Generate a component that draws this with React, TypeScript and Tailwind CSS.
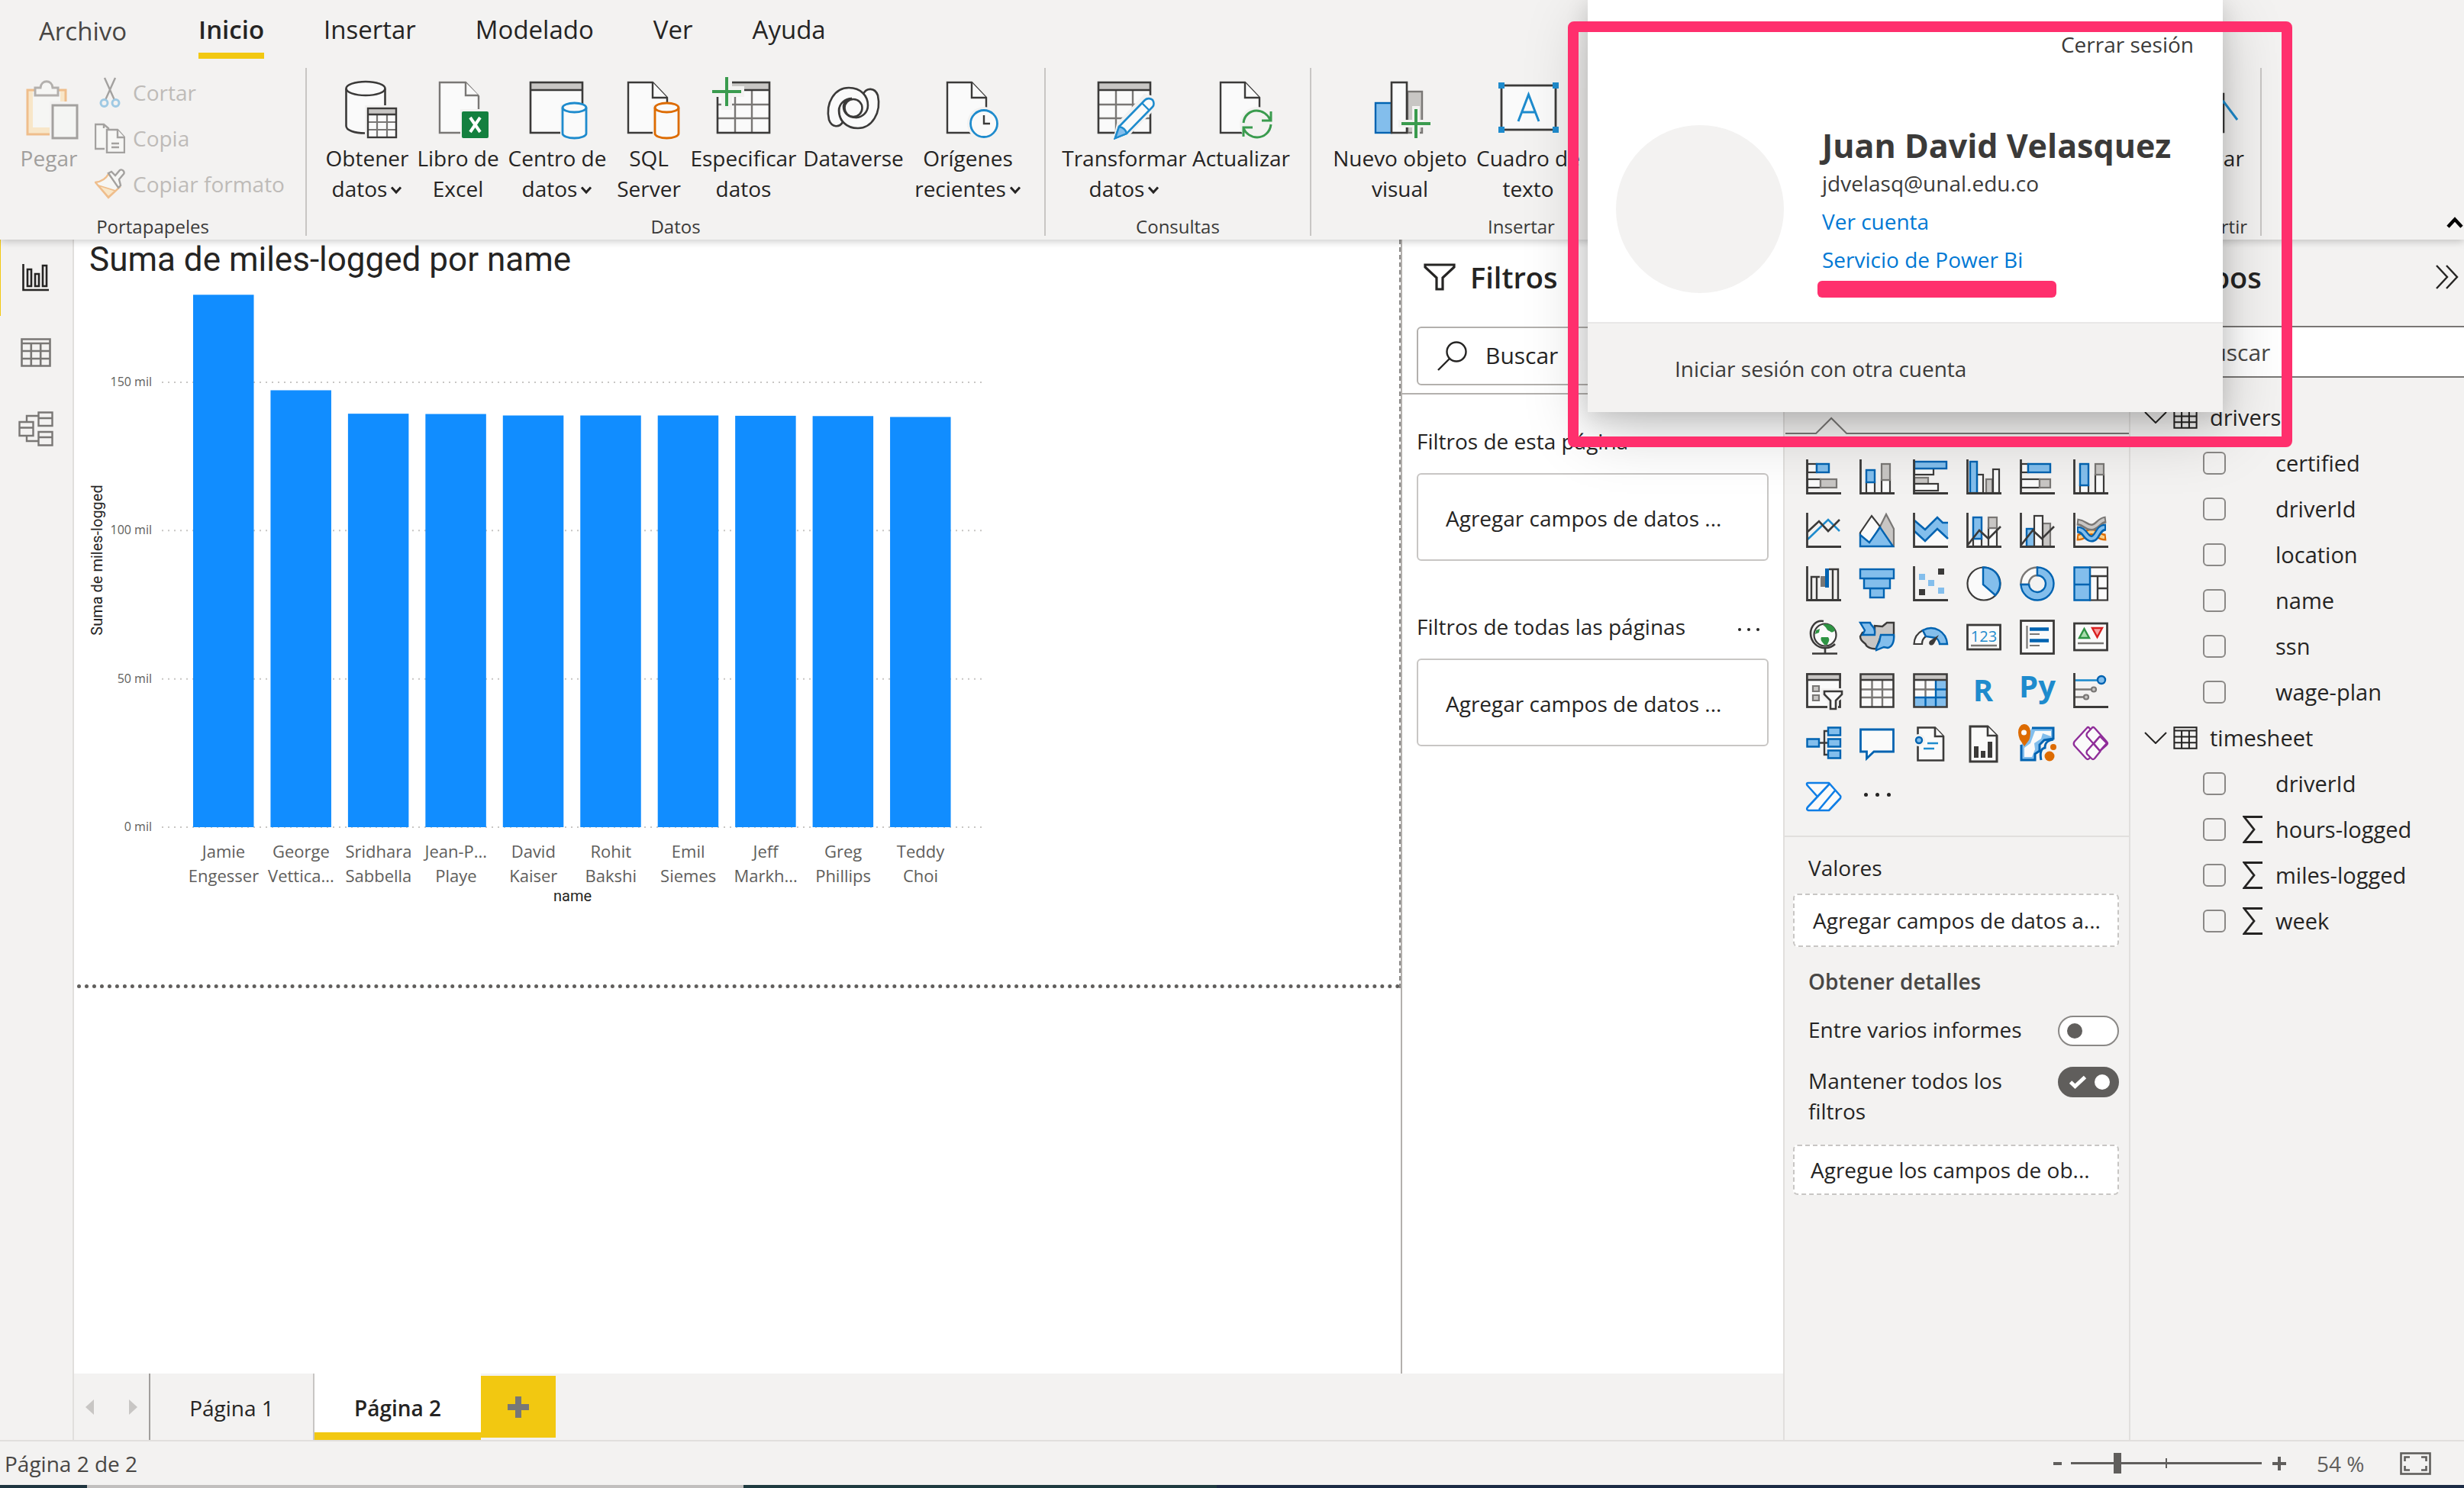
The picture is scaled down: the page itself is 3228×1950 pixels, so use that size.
import React from "react";

const INK = "#3b3a39";
const MID = "#797775";
const PALE = "#c8c6c4";
const PAPER = "#fafafa";
const NAVY = "#0063b1";
const SKY = "#83beec";
const BLUE = "#1e8bcd";
const GREEN = "#3a9b4e";

/* ---------- Ribbon icons (80 x 80) ---------- */

function Sheet({ stroke = INK }: { stroke?: string }) {
  return (
    <g fill={PAPER} stroke={stroke} strokeWidth="2.4">
      <path d="M13 5H45L64 25V71H13Z" />
      <path d="M45 5V25H64" />
    </g>
  );
}

function Cylinder({ x, y, w, h, color }: { x: number; y: number; w: number; h: number; color: string }) {
  const r = w / 2;
  return (
    <g>
      <path d={`M${x - 3} ${y + 2}H${x + w + 4}V${y + h + 3}H${x - 3}Z`} fill="#f3f2f1" />
      <path
        d={`M${x} ${y + 6}a${r} 6 0 0 1 ${w} 0V${y + h - 6}a${r} 6 0 0 1 ${-w} 0Z`}
        fill={PAPER}
        stroke={color}
        strokeWidth="2.8"
      />
      <path d={`M${x} ${y + 6}a${r} 6 0 0 0 ${w} 0`} fill="none" stroke={color} strokeWidth="2.8" />
    </g>
  );
}

function BigTable() {
  return (
    <g>
      <rect x="6" y="5" width="68" height="66" fill={PAPER} />
      <rect x="6" y="5" width="68" height="10" fill={PALE} />
      <path d="M29 15V71M51 15V71M6 34H74M6 52H74" stroke={MID} strokeWidth="2.4" />
      <path d="M6 15H74" stroke={INK} strokeWidth="2.4" />
      <rect x="6" y="5" width="68" height="66" fill="none" stroke={INK} strokeWidth="2.6" />
    </g>
  );
}

const ribbonArt: Record<string, React.ReactNode> = {
  getData: (
    <g>
      <path d="M13 13V62C13 68 24 71 36 71H64V13Z" fill={PAPER} />
      <ellipse cx="38" cy="13" rx="25.5" ry="9" fill={PAPER} stroke={INK} strokeWidth="2.6" />
      <path d="M12.500 13V62C12.500 68 24 71.500 37 71.500M63.500 13V36" fill="none" stroke={INK} strokeWidth="2.6" />
      <rect x="37" y="35" width="44" height="46" fill="#f3f2f1" />
      <rect x="41" y="39" width="37" height="38" fill={PAPER} />
      <rect x="41" y="39" width="37" height="8" fill={PALE} />
      <path d="M53 47V77M66 47V77M41 57H78M41 67H78" stroke={MID} strokeWidth="2.2" />
      <path d="M41 47H78" stroke={INK} strokeWidth="2.4" />
      <rect x="41" y="39" width="37" height="38" fill="none" stroke={INK} strokeWidth="2.4" />
    </g>
  ),
  excel: (
    <g>
      <g fill={PAPER} stroke={MID} strokeWidth="2.4">
        <path d="M16 5H50L67 23V71H16Z" />
        <path d="M50 5V22H67" />
      </g>
      <rect x="43" y="40" width="40" height="42" fill="#f3f2f1" />
      <rect x="45" y="43" width="35" height="35" rx="2" fill="#14803f" />
      <path d="M56 51L69 70M69 51L56 70" stroke="#fff" strokeWidth="4" />
    </g>
  ),
  hub: (
    <g>
      <rect x="5" y="5" width="68" height="66" fill={PAPER} />
      <rect x="5" y="5" width="68" height="10" fill={PALE} />
      <path d="M5 15H73" stroke={INK} strokeWidth="2.4" />
      <rect x="5" y="5" width="68" height="66" fill="none" stroke={INK} strokeWidth="2.6" />
      <Cylinder x={47} y={32} w={31} h={46} color={BLUE} />
    </g>
  ),
  sql: (
    <g>
      <Sheet />
      <Cylinder x={48} y={32} w={31} h={46} color="#dd6b00" />
    </g>
  ),
  enter: (
    <g>
      <BigTable />
      <path d="M0 -3H25V10H41V24H25V41H11V24H-3V10H0Z" fill="#f3f2f1" />
      <path d="M18 -2V36M-1 17H37" stroke={GREEN} strokeWidth="4" />
    </g>
  ),
  dataverse: (
    <g fill="none" stroke={INK} strokeWidth="2.6">
      <path
        d="M53 20C57 12 68 11 72 22C77 45 64 65 46 65C30 65 21 54 21 42C21 33 28 26 37 26C46 26 53 33 53 41C53 48 48 51 43 51"
        fill={PAPER}
      />
      <path
        d="M26 57C22 64 12 65 8 54C3 31 16 12 34 12C50 12 59 23 59 35C59 44 52 51 43 51C34 51 27 45 27 37C27 31 32 27 38 26C29 26 21 33 21 42C21 48 23 53 26 57Z"
        fill={PAPER}
      />
      <circle cx="40" cy="38.500" r="11.500" fill={PAPER} />
    </g>
  ),
  recent: (
    <g>
      <Sheet />
      <circle cx="61" cy="59" r="22" fill="#f3f2f1" />
      <circle cx="61" cy="59" r="17.500" fill={PAPER} stroke={BLUE} strokeWidth="2.8" />
      <path d="M61 48V59H69" fill="none" stroke={INK} strokeWidth="2.4" />
    </g>
  ),
  transform: (
    <g>
      <BigTable />
      <path d="M25 81L30 59L66 20L84 24L82 38L42 79Z" fill="#f3f2f1" />
      <path d="M28 78L33 63L67 28C70 25 75 26 77 28C79 31 79 35 77 37L43 72Z" fill={PAPER} stroke={BLUE} strokeWidth="2.6" />
      <path d="M28 78L33 63C38 64 42 67 43 72Z" fill={SKY} stroke={BLUE} strokeWidth="2.4" />
      <path d="M63 32L73 42" stroke={BLUE} strokeWidth="2.4" />
    </g>
  ),
  refresh: (
    <g>
      <Sheet />
      <circle cx="61" cy="60" r="23" fill="#f3f2f1" />
      <path d="M43 58C44 48 52 42 60 42C68 42 75 47 78 54M79 43V55H67M79 60C78 70 70 77 61 77C53 77 46 72 43 65M43 76V64H55" fill="none" stroke={GREEN} strokeWidth="3" />
    </g>
  ),
  visual: (
    <g>
      <rect x="50" y="17" width="19" height="54" fill={PALE} stroke={MID} strokeWidth="2.4" />
      <rect x="8" y="32" width="21" height="39" fill={SKY} stroke={NAVY} strokeWidth="2.4" />
      <rect x="29" y="5" width="20" height="66" fill={PAPER} stroke={INK} strokeWidth="2.6" />
      <path d="M56 36H66V54H84V64H66V82H56V64H38V54H56Z" fill="#f3f2f1" />
      <path d="M61 40V78M42 59H80" stroke={GREEN} strokeWidth="4" />
    </g>
  ),
  textbox: (
    <g>
      <rect x="5" y="9" width="71" height="58" fill={PAPER} stroke={INK} strokeWidth="2.8" />
      <path d="M27 56L40.500 21L54 56M32 44H49" fill="none" stroke={BLUE} strokeWidth="3" />
      <path d="M1 5H9V13H1ZM72 5H80V13H72ZM1 63H9V71H1ZM72 63H80V71H72Z" fill={BLUE} />
    </g>
  ),
  publish: (
    <g>
      <rect x="6" y="20" width="60" height="50" fill={PAPER} stroke={INK} strokeWidth="2.6" />
      <path d="M44 54L66 30L84 54" fill="none" stroke={BLUE} strokeWidth="3" />
    </g>
  ),
};

type RibbonItem = { art: string; lines: string[]; width: string; menu?: boolean };

const dataItems: RibbonItem[] = [
  { art: "getData", lines: ["Obtener", "datos"], width: "w-[118px]", menu: true },
  { art: "excel", lines: ["Libro de", "Excel"], width: "w-[120px]" },
  { art: "hub", lines: ["Centro de", "datos"], width: "w-[140px]", menu: true },
  { art: "sql", lines: ["SQL", "Server"], width: "w-[100px]" },
  { art: "enter", lines: ["Especificar", "datos"], width: "w-[148px]" },
  { art: "dataverse", lines: ["Dataverse"], width: "w-[140px]" },
  { art: "recent", lines: ["Orígenes", "recientes"], width: "w-[160px]", menu: true },
];
const queryItems: RibbonItem[] = [
  { art: "transform", lines: ["Transformar", "datos"], width: "w-[166px]", menu: true },
  { art: "refresh", lines: ["Actualizar"], width: "w-[140px]" },
];
const insertItems: RibbonItem[] = [
  { art: "visual", lines: ["Nuevo objeto", "visual"], width: "w-[192px]" },
  { art: "textbox", lines: ["Cuadro de", "texto"], width: "w-[144px]" },
];

function Chevron({ className }: { className?: string }) {
  return (
    <svg viewBox="0 0 16 12" className={className} aria-hidden="true">
      <path d="M2 2.500L8 9L14 2.500" fill="none" stroke="currentColor" strokeWidth="3" />
    </svg>
  );
}

function RibbonButton({ item }: { item: RibbonItem }) {
  return (
    <button type="button" className={`${item.width} flex shrink-0 flex-col items-center text-[28px] leading-10 whitespace-nowrap text-[#252423]`}>
      <svg viewBox="0 0 80 80" className="mb-1 size-20 overflow-visible" aria-hidden="true">
        {ribbonArt[item.art]}
      </svg>
      {item.lines.map((line, i) => (
        <span key={line} className="flex items-center gap-1">
          {line}
          {item.menu && i === item.lines.length - 1 && <Chevron className="mt-1 h-3 w-4" />}
        </span>
      ))}
    </button>
  );
}

function RibbonGroup({ label, items, children, last }: { label: string; items?: RibbonItem[]; children?: React.ReactNode; last?: string }) {
  return (
    <section className={`flex shrink-0 flex-col border-r-2 border-[#c8c6c4] ${last ?? ""}`}>
      <div className="flex flex-1 px-5 pt-3.5">
        {items?.map((item) => <RibbonButton key={item.art} item={item} />)}
        {children}
      </div>
      <h3 className="text-center text-[24px] leading-6 text-[#3b3a39]">{label}</h3>
    </section>
  );
}

function Clipboard() {
  return (
    <div className="-ml-1 flex w-[364px] gap-3">
      <button type="button" disabled className="flex w-[96px] flex-col items-center text-[28px] leading-10 text-[#a19f9d]">
        <svg viewBox="0 0 80 80" className="mb-1 size-20" aria-hidden="true">
          <rect x="12" y="15" width="50" height="58" fill="#f8e6c8" stroke="#efbe8c" strokeWidth="3" />
          <rect x="19" y="17" width="36" height="47" fill="#f6f6f4" />
          <path d="M22 12H29C30 1 44 1 45 12H52V22H22Z" fill="#f6f6f4" stroke="#b3b0ad" strokeWidth="3" />
          <rect x="41" y="30" width="40" height="50" fill="#f3f2f1" />
          <rect x="45" y="35" width="32" height="43" fill="#f4f5f3" stroke="#a3a19f" strokeWidth="3" />
        </svg>
        Pegar
      </button>
      <div className="-mt-3 flex flex-col text-[28px] leading-[60px] whitespace-nowrap text-[#bebbb8]">
        <button type="button" disabled className="flex items-center gap-2.5">
          <svg viewBox="0 0 40 40" className="size-10" aria-hidden="true">
            <path d="M13 1L26 30M27 1L14 30" stroke="#a3a19f" strokeWidth="2.400" />
            <circle cx="12.500" cy="34" r="4.500" fill="none" stroke="#9fc9e3" strokeWidth="3" />
            <circle cx="27.500" cy="34" r="4.500" fill="none" stroke="#9fc9e3" strokeWidth="3" />
          </svg>
          Cortar
        </button>
        <button type="button" disabled className="flex items-center gap-2.5">
          <svg viewBox="0 0 40 40" className="size-10" aria-hidden="true">
            <g fill="#f6f6f4" stroke="#a3a19f" strokeWidth="2.400">
              <path d="M13 34H1V2H12L18 7V12M12 2V7" />
              <path d="M16 9H30L39 19V39H16Z" />
              <path d="M30 9V19H39M22 27H32M22 32H32" />
            </g>
          </svg>
          Copia
        </button>
        <button type="button" disabled className="flex items-center gap-2.5">
          <svg viewBox="0 0 40 40" className="size-10" aria-hidden="true">
            <path d="M1 18L18 38L33 24L18 7C15 13 8 17 1 18Z" fill="#f6f6f4" stroke="#efbe8c" strokeWidth="2.400" />
            <path d="M5 22L27 29L18 37Z" fill="#f8e6c8" stroke="#efbe8c" strokeWidth="1.800" />
            <path d="M18 6L22 4L27 9L33 2C36 0 40 4 38 7L32 14L34 22L31 25Z" fill="#f6f6f4" stroke="#a3a19f" strokeWidth="2.400" />
          </svg>
          Copiar formato
        </button>
      </div>
    </div>
  );
}

function Ribbon() {
  const tabs = ["Inicio", "Insertar", "Modelado", "Ver", "Ayuda"];
  return (
    <header className="relative z-10 bg-[#f3f2f1] shadow-[0_2px_10px_rgba(0,0,0,0.22)]">
      <nav className="flex h-[89px] items-start gap-[78px] pt-[13px] pl-[51px] text-[33px] leading-[52px] text-[#252423]">
        <button type="button" className="mr-4 pt-0.5 text-[#484644]">Archivo</button>
        {tabs.map((tab) =>
          tab === "Inicio" ? (
            <button key={tab} type="button" className="border-b-8 border-[#f2c811] pb-1 font-semibold">{tab}</button>
          ) : (
            <button key={tab} type="button">{tab}</button>
          ),
        )}
      </nav>
      <div className="flex h-[225px] pb-[5px]">
        <RibbonGroup label="Portapapeles">
          <Clipboard />
        </RibbonGroup>
        <RibbonGroup label="Datos" items={dataItems} />
        <RibbonGroup label="Consultas" items={queryItems} />
        <RibbonGroup label="Insertar" items={insertItems} last="w-[552px]" />
        <div className="ml-auto flex">
          <RibbonGroup label="Compartir" items={[{ art: "publish", lines: ["Publicar"], width: "w-[108px]" }]} />
          <div className="flex w-[265px] items-end justify-end">
            <button type="button" aria-label="Contraer cinta" className="pb-2">
              <Chevron className="h-[18px] w-6 rotate-180" />
            </button>
          </div>
        </div>
      </div>
    </header>
  );
}

/* ---------- Left rail ---------- */

function GridGlyph({ color, className }: { color: string; className: string }) {
  return (
    <svg viewBox="0 0 40 38" className={className} aria-hidden="true">
      <path d="M1.500 1.500H38.500V36.500H1.500ZM1.500 7H38.500M1.500 17H38.500M1.500 27H38.500M13.800 7V36.500M26.200 7V36.500" fill="none" stroke={color} strokeWidth="2.600" />
    </svg>
  );
}

function Rail() {
  return (
    <aside className="flex w-[97px] shrink-0 flex-col border-r-2 border-[#e1dfdd] bg-[#f3f2f1]">
      <button type="button" aria-label="Informe" className="flex h-[100px] items-center border-l border-[#f2c811] pl-7">
        <svg viewBox="0 0 36 36" className="size-9" aria-hidden="true">
          <path d="M1.500 0V34H35M7 7H12V29H7ZM17 13H22V29H17ZM27 2H32V29H27Z" fill="none" stroke="#252423" strokeWidth="2.600" />
        </svg>
      </button>
      <button type="button" aria-label="Datos" className="flex h-[96px] items-center pl-[27px]">
        <GridGlyph color="#797775" className="h-[38px] w-10" />
      </button>
      <button type="button" aria-label="Modelo" className="flex h-[104px] items-center pl-6">
        <svg viewBox="0 0 46 46" className="size-[46px]" aria-hidden="true">
          <path d="M1.500 14H19.500V32H1.500ZM1.500 21.500H19.500M26.500 1.500H44.500V19H26.500ZM26.500 9H44.500M26.500 27H44.500V44.500H26.500ZM26.500 34H44.500M11 14V6H26M11 32V39H26" fill="none" stroke="#797775" strokeWidth="2.400" />
        </svg>
      </button>
    </aside>
  );
}

/* ---------- Chart ---------- */

const drivers = [
  { a: "Jamie", b: "Engesser", miles: 179.5 },
  { a: "George", b: "Vettica...", miles: 147.3 },
  { a: "Sridhara", b: "Sabbella", miles: 139.4 },
  { a: "Jean-P...", b: "Playe", miles: 139.3 },
  { a: "David", b: "Kaiser", miles: 138.8 },
  { a: "Rohit", b: "Bakshi", miles: 138.8 },
  { a: "Emil", b: "Siemes", miles: 138.8 },
  { a: "Jeff", b: "Markh...", miles: 138.7 },
  { a: "Greg", b: "Phillips", miles: 138.6 },
  { a: "Teddy", b: "Choi", miles: 138.3 },
];

function Chart() {
  const base = 719;
  const perThousand = 3.887;
  return (
    <figure className="pt-0.5">
      <figcaption className="mb-px pl-5 font-[Roboto,sans-serif] text-[44px] leading-[48px] text-[#252423]">Suma de miles-logged por name</figcaption>
      <svg viewBox="0 0 1220 840" className="h-[840px] w-[1220px]" role="img" aria-label="Suma de miles-logged por name">
        {[0, 50, 100, 150].map((v) => {
          const y = base - v * perThousand;
          return (
            <g key={v}>
              <line x1="115" x2="1190" y1={y} y2={y} stroke="#c8c6c4" strokeWidth="2" strokeDasharray="2 6" />
              <text x="102" y={y + 5} textAnchor="end" fontSize="16" fill="#605e5c">{v} mil</text>
            </g>
          );
        })}
        {drivers.map((d, i) => {
          const x = 156 + i * 101.45;
          const h = d.miles * perThousand;
          return (
            <g key={d.a} fontSize="22" fill="#605e5c" textAnchor="middle">
              <rect x={x} y={base - h} width="79.5" height={h} fill="#118dff" />
              <text x={x + 40} y="759">{d.a}</text>
              <text x={x + 40} y="791">{d.b}</text>
            </g>
          );
        })}
        <g fontFamily="Roboto, sans-serif" fontSize="20" fill="#252423" textAnchor="middle">
          <text x="653" y="816">name</text>
          <text transform="translate(37 369) rotate(-90)">Suma de miles-logged</text>
        </g>
      </svg>
    </figure>
  );
}

/* ---------- Filters ---------- */

function FilterSection({ title, className }: { title: string; className: string }) {
  return (
    <section className={className}>
      <div className="flex h-10 items-center justify-between pr-3">
        <h3 className="text-[28px] text-[#252423]">{title}</h3>
        <button type="button" aria-label="Más opciones" className="flex gap-2 pt-2">
          <i className="size-1 rounded-full bg-[#252423]" />
          <i className="size-1 rounded-full bg-[#252423]" />
          <i className="size-1 rounded-full bg-[#252423]" />
        </button>
      </div>
      <div className="mt-[22px] flex h-[115px] items-center rounded-md border-2 border-[#c8c6c4] pt-0.5 pl-9 text-[28px] text-[#252423]">
        Agregar campos de datos ...
      </div>
    </section>
  );
}

function Filters() {
  return (
    <aside className="w-[501px] shrink-0 border-l-2 border-[#b3b0ad] bg-white">
      <div className="border-b-2 border-[#b3b0ad] px-[19px] pb-2.5">
        <div className="flex items-center gap-[18px] pt-6 pl-2">
          <svg viewBox="0 0 44 38" className="h-[38px] w-11" aria-hidden="true">
            <path d="M3 3H41V6L26 20V35H18V20L3 6Z" fill="none" stroke="#252423" strokeWidth="3.200" />
          </svg>
          <h2 className="text-[38px] leading-[50px] font-semibold text-[#252423]">Filtros</h2>
        </div>
        <label className="mt-10 flex h-[77px] items-center gap-6 rounded-md border-2 border-[#b3b0ad] pl-6">
          <svg viewBox="0 0 40 40" className="size-10 shrink-0" aria-hidden="true">
            <circle cx="26" cy="14" r="12.500" fill="none" stroke="#252423" strokeWidth="2.400" />
            <path d="M17 23L2 38" stroke="#252423" strokeWidth="2.400" />
          </svg>
          <input type="text" placeholder="Buscar" className="w-full bg-transparent pb-0.5 text-[30px] outline-none placeholder:text-[#252423]" />
        </label>
      </div>
      <FilterSection title="Filtros de esta página" className="px-[19px] pt-[41px]" />
      <FilterSection title="Filtros de todas las páginas" className="px-[19px] pt-[66px]" />
    </aside>
  );
}

/* ---------- Visualizations ---------- */

const dark = { fill: PAPER, stroke: INK, strokeWidth: 2.2 };
const grey = { fill: PALE, stroke: MID, strokeWidth: 2.2 };
const blue = { fill: SKY, stroke: NAVY, strokeWidth: 2.4 };
const Axis = () => <path d="M1.500 0V44.500H46" fill="none" stroke={INK} strokeWidth="2.800" />;

const vizArt: { name: string; art: React.ReactNode }[] = [
  { name: "Barras apiladas", art: (<g><rect x="2" y="6" width="12" height="11" {...dark} /><rect x="14" y="6" width="16" height="11" {...blue} /><rect x="2" y="26" width="17" height="11" {...dark} /><rect x="19" y="26" width="21" height="11" {...grey} /><Axis /></g>) },
  { name: "Columnas apiladas", art: (<g><rect x="9" y="30" width="11" height="14" {...dark} /><rect x="9" y="14" width="11" height="16" {...blue} /><rect x="29" y="27" width="11" height="17" {...dark} /><rect x="29" y="6" width="11" height="21" {...grey} /><Axis /></g>) },
  { name: "Barras agrupadas", art: (<g><rect x="2" y="12" width="25" height="8" {...dark} /><rect x="2" y="3" width="42" height="9" {...blue} /><rect x="2" y="24" width="18" height="8" {...grey} /><rect x="2" y="32" width="31" height="9" {...dark} /><Axis /></g>) },
  { name: "Columnas agrupadas", art: (<g><rect x="14" y="20" width="8" height="24" {...dark} /><rect x="5" y="3" width="9" height="41" {...blue} /><rect x="26" y="26" width="8" height="18" {...grey} /><rect x="35" y="13" width="8" height="31" {...dark} /><Axis /></g>) },
  { name: "Barras 100%", art: (<g><rect x="2" y="6" width="9" height="11" {...dark} /><rect x="11" y="6" width="29" height="11" {...blue} /><rect x="2" y="26" width="24" height="11" {...dark} /><rect x="26" y="26" width="14" height="11" {...grey} /><Axis /></g>) },
  { name: "Columnas 100%", art: (<g><rect x="9" y="34" width="11" height="10" {...dark} /><rect x="9" y="6" width="11" height="28" {...blue} /><rect x="29" y="20" width="11" height="24" {...dark} /><rect x="29" y="6" width="11" height="14" {...grey} /><Axis /></g>) },
  { name: "Líneas", art: (<g fill="none" strokeWidth="2.600"><path d="M2 35L29 9L44 24" stroke={BLUE} /><path d="M2 25L17 11L29 24L44 9" stroke={INK} /><Axis /></g>) },
  { name: "Áreas", art: (<g><path d="M27 18L35 2L45 21V44H30Z" {...grey} /><path d="M1 26L16 4L27 18L14 40L1 30Z" {...dark} /><path d="M1 29L13 39L27 19L44 44H1Z" {...blue} /></g>) },
  { name: "Áreas apiladas", art: (<g><path d="M2 26L16 38L32 22L46 34V44H2Z" fill={PAPER} /><path d="M2 10L16 22L32 6L39 13H46V34L32 21L16 37L2 24Z" fill={SKY} /><path d="M2 10L16 22L32 6L39 13H46M2 24L16 37L32 21L46 34" fill="none" stroke={NAVY} strokeWidth="2.600" /><Axis /></g>) },
  { name: "Líneas y columnas apiladas", art: (<g><rect x="9" y="34" width="11" height="10" {...dark} /><rect x="9" y="6" width="11" height="28" {...blue} /><rect x="29" y="20" width="11" height="24" {...dark} /><rect x="29" y="6" width="11" height="14" {...grey} /><path d="M2 42L17 23L29 34L45 18" fill="none" stroke={INK} strokeWidth="2.600" /><Axis /></g>) },
  { name: "Líneas y columnas agrupadas", art: (<g><rect x="30" y="14" width="10" height="30" {...grey} /><rect x="9" y="21" width="11" height="23" {...blue} /><rect x="19" y="4" width="11" height="40" {...dark} /><path d="M2 42L17 23L29 34L45 18" fill="none" stroke={INK} strokeWidth="2.600" /><Axis /></g>) },
  { name: "Cinta", art: (<g fill="none"><path d="M5 32C14 33 17 25 24 25S34 33 43 32" stroke="#dd6b00" strokeWidth="9" /><path d="M7 32C14 32 17 25 24 25S34 32 41 32" stroke="#fbd08a" strokeWidth="4" /><path d="M5 12C15 13 17 19 24 19S34 10 43 9" stroke={MID} strokeWidth="9" /><path d="M7 12C15 13 17 19 24 19S34 10 41 9" stroke={PALE} strokeWidth="4" /><path d="M5 22C16 22 16 34 24 34S32 19 43 19" stroke={NAVY} strokeWidth="9" /><path d="M7 22C16 22 16 34 24 34S32 19 41 19" stroke={SKY} strokeWidth="4" /><Axis /></g>) },
  { name: "Cascada", art: (<g><rect x="19" y="13" width="6" height="14" fill={MID} /><rect x="25" y="3" width="5" height="25" fill={NAVY} /><path d="M7 44V14H18M14 14V44M30 4H42V44M35 4V44" fill="none" stroke={INK} strokeWidth="2.400" /><Axis /></g>) },
  { name: "Embudo", art: (<g {...blue}><rect x="14" y="29" width="18" height="12" /><rect x="6" y="16" width="34" height="13" /><rect x="1" y="4" width="44" height="12" /></g>) },
  { name: "Dispersión", art: (<g><path d="M8 10h8v8h-8ZM20 18h8v8h-8ZM33 28h8v8h-8Z" fill={SKY} /><path d="M33 3h8v8h-8ZM8 30h8v8h-8Z" fill={INK} /><Axis /></g>) },
  { name: "Circular", art: (<g><circle cx="23" cy="23" r="21.500" {...dark} /><path d="M22 1.500V24L38 38A21.500 21.500 0 0 0 22 1.500Z" {...blue} /></g>) },
  { name: "Anillos", art: (<g><path d="M1.500 24A21.500 21.500 0 0 1 23 1.500V12A11 11 0 0 0 12 24Z" fill={PAPER} stroke={MID} strokeWidth="2.400" /><path d="M23 1.500A21.500 21.500 0 1 1 1.500 24H12A11 11 0 1 0 23 12Z" {...blue} /></g>) },
  { name: "Treemap", art: (<g><rect x="22" y="1.500" width="23" height="43" {...dark} /><path d="M22 13H45M32 13V44M32 29H45" stroke={INK} strokeWidth="2.400" /><path d="M1.500 1.500H22V44.500H1.500ZM1.500 24H22" {...blue} /></g>) },
  { name: "Mapa", art: (<g><circle cx="25" cy="20" r="14.500" {...dark} /><path d="M22 7C28 10 26 14 31 15C34 18 37 16 38 13C35 7 28 4 22 7ZM12 19L17 17L18 12L13 14ZM20 23H29C32 27 29 29 28 33H24C22 30 18 27 20 23Z" fill="#2e9443" /><path d="M23 2C12 0 6 10 6 18C6 30 16 38 26 37C31 37 35 35 38 32M25 37V44M8 44.500H41" fill="none" stroke={INK} strokeWidth="2.600" /></g>) },
  { name: "Mapa coroplético", art: (<g><path d="M1 22L4 17H20V8L30 9L36 4H45V22H28L22 38C16 39 9 36 8 32C3 28 1 26 1 22Z" fill={PALE} stroke={INK} strokeWidth="2.400" /><path d="M1 4H14C16 10 21 8 20 20H4L7 14Z" {...blue} /><path d="M28 20H45C46 30 42 36 37 37L32 36L22 40C21 34 27 32 27 24Z" {...blue} /></g>) },
  { name: "Medidor", art: (<g><path d="M1.500 32C2 22 7 17 13 14L17 22C14 24 12 28 12 32Z" {...dark} /><path d="M13 14C28 6 44 16 45 32H35C34 27 32 25 30 24L17 22Z" {...blue} /><path d="M34 20L28 31C25 36 19 33 22 28Z" fill={INK} /></g>) },
  { name: "Tarjeta", art: (<g><rect x="1.500" y="7" width="43" height="32" {...dark} strokeWidth="2.800" /><text x="23" y="29" textAnchor="middle" fontSize="20" fill={BLUE}>123</text><path d="M6 34H40" stroke={MID} strokeWidth="2.400" /></g>) },
  { name: "Tarjeta de varias filas", art: (<g><rect x="1.500" y="1.500" width="43" height="43" {...dark} strokeWidth="2.800" /><path d="M9.500 8V38M13 19H26M13 34H26" stroke={MID} strokeWidth="2.200" /><path d="M13 12.500H38M13 27.500H38" stroke={NAVY} strokeWidth="4.500" /></g>) },
  { name: "KPI", art: (<g><rect x="1.500" y="5" width="43" height="35" {...dark} strokeWidth="2.800" /><path d="M8 24L14.500 12L21 24Z" fill="#a9dcae" stroke="#2e9443" strokeWidth="2.400" /><path d="M25 11H38L31.500 23Z" fill="#f9a0a0" stroke="#d92020" strokeWidth="2.400" /><path d="M6 31H40" stroke={MID} strokeWidth="2.400" /></g>) },
  { name: "Segmentación", art: (<g><rect x="1.500" y="1.500" width="43" height="43" {...dark} strokeWidth="2.800" /><path d="M1.500 1.500H44.500V9H1.500Z" fill={PALE} stroke={INK} strokeWidth="2.400" /><path d="M9 17H17V24H9ZM9 29H17V36H9Z" {...grey} /><path d="M20 20H51V31L42 37V50H28V37L20 31Z" fill="#f3f2f1" /><path d="M24 24H47V28L39 36V47H32V36L24 28Z" {...dark} strokeWidth="2.600" /></g>) },
  { name: "Tabla", art: (<g><rect x="1.500" y="1.500" width="43" height="43" fill={PAPER} /><rect x="1.500" y="1.500" width="43" height="7" fill={PALE} /><path d="M16.500 9V44M30 9V44M2 21.500H44M2 32H44" stroke={MID} strokeWidth="2.400" /><path d="M1.500 1.500H44.500V44.500H1.500ZM2 9H44" fill="none" stroke={INK} strokeWidth="2.600" /></g>) },
  { name: "Matriz", art: (<g><rect x="1.500" y="1.500" width="43" height="43" fill={PAPER} /><rect x="1.500" y="1.500" width="43" height="7" fill={PALE} /><path d="M30 9H44V44H2V32H30Z" fill={SKY} /><path d="M16.500 9V32M2 21.500H30" stroke={MID} strokeWidth="2.400" /><path d="M30 9V44M2 32H44M30 21.500H44M16.500 32V44" stroke={NAVY} strokeWidth="2.400" /><path d="M1.500 1.500H44.500V44.500H1.500ZM2 9H44" fill="none" stroke={INK} strokeWidth="2.600" /></g>) },
  { name: "Visual de R", art: <text x="22" y="37" textAnchor="middle" fontSize="40" fontWeight="700" fill={BLUE}>R</text> },
  { name: "Visual de Python", art: <text x="23" y="32" textAnchor="middle" fontSize="40" fontWeight="700" fill={BLUE}>Py</text> },
  { name: "Influenciadores", art: (<g><path d="M2 9.500H32" stroke={BLUE} strokeWidth="2.600" /><circle cx="37" cy="9" r="5" {...blue} /><path d="M2 21.500H24M2 31.500H14" stroke={MID} strokeWidth="2.600" /><circle cx="27" cy="21.500" r="3" {...grey} /><circle cx="17" cy="31.500" r="3" {...grey} /><Axis /></g>) },
  { name: "Árbol de descomposición", art: (<g><path d="M18 21.500H28M28 6H24V37H28" fill="none" stroke={INK} strokeWidth="2.400" /><path d="M1.500 16.500H17V26.500H1.500ZM29 1.500H45V11.500H29ZM29 16.500H45V26.500H29ZM29 31.500H45V41.500H29Z" {...blue} /></g>) },
  { name: "Preguntas y respuestas", art: <path d="M1.500 4H44.500V33H19L9.500 42V33H1.500Z" fill={PAPER} stroke={NAVY} strokeWidth="2.800" /> },
  { name: "Narración inteligente", art: (<g><path d="M6.500 1.500H29L40 13V44.500H6.500Z" {...dark} strokeWidth="2.600" /><path d="M29 1.500V13H40" {...dark} strokeWidth="2.600" /><circle cx="8" cy="18" r="8" fill="#f3f2f1" /><circle cx="8" cy="18" r="4" {...blue} /><path d="M19 22H33M14 29H28" stroke={BLUE} strokeWidth="2.400" /></g>) },
  { name: "Informe paginado", art: (<g><path d="M5 0H28L40 12V46H5Z" {...dark} strokeWidth="3" /><path d="M28 0V12H40" {...dark} strokeWidth="2.600" /><path d="M10 26h6v15h-6ZM19 32h6v9h-6ZM28 20h6v21h-6Z" fill={INK} /></g>) },
  { name: "ArcGIS", art: (<g><path d="M2 24V44H20V36L26 32V24L32 18L44 16V2H16" fill={SKY} stroke={NAVY} strokeWidth="3" /><path d="M6 28V40H16L20 30L19 22L28 16L30 9L41 13V6H20L14 22Z" fill={PAPER} /><path d="M30 44C26 34 30 28 34 27C34 20 40 18 46 18V46H30Z" fill="#f3f2f1" /><path d="M28 44C26 34 28 29 33 28C33 20 38 18 44 17" fill="none" stroke={NAVY} strokeWidth="3" /><path d="M6 26L0 17Q-2 12-2 8A8 10 0 0 1 14 6Q14 14 12 18Z" fill="#dd6b00" /><circle cx="5.500" cy="8" r="3.500" fill={PAPER} /><circle cx="44" cy="27" r="4" fill="#dd6b00" /><circle cx="39" cy="39" r="6.500" fill="#dd6b00" /></g>) },
  { name: "Power Apps", art: (<g fill={PAPER} stroke="#8f2d99" strokeWidth="2.400" strokeLinejoin="round"><path d="M18 2L1.500 20Q0 22.500 1.500 25L17 42Q19 44 21 42L27 36V8L21 2Q19.500 0 18 2Z" /><path d="M24.500 2L18 9Q17 11 18 13L35 32L44 24Q46 22 44 20L28 2Q26 0 24.500 2ZM35 13L18 32Q17 34 18 36L24 42Q26 44 28 42L36 32" /><path d="M27 22.500L35 13L44 22L35 32Z" /></g>) },
  { name: "Power Automate", art: (<g fill={PAPER} stroke="#0f7ee6" strokeWidth="2.600" strokeLinejoin="round"><path d="M3 4H30L45 21Q46 22.500 45 24L30 40H3Q0 39 2 36L15 22L1.500 7Q0 4 3 4Z" /><path d="M15 22L31 5M17 39L38 14" fill="none" /></g>) },
];

function Toggle({ on, label }: { on?: boolean; label: string }) {
  return (
    <label className="flex items-start justify-between">
      <span className="w-[300px] leading-10">{label}</span>
      <span className="relative mt-0.5 h-10 w-20">
        <input type="checkbox" role="switch" defaultChecked={on} className="block h-10 w-20 appearance-none rounded-full border-2 border-[#8a8886] bg-white checked:border-[#605e5c] checked:bg-[#605e5c]" />
        {on ? (
          <>
            <svg viewBox="0 0 24 20" className="absolute top-2.5 left-3.5 h-5 w-6" aria-hidden="true">
              <path d="M2.500 10L8.500 15.500L21.500 3.500" fill="none" stroke="#fff" strokeWidth="5" />
            </svg>
            <i className="absolute top-2.5 right-3 size-5 rounded-full bg-white" />
          </>
        ) : (
          <i className="absolute top-2.5 left-3 size-5 rounded-full bg-[#605e5c]" />
        )}
      </span>
    </label>
  );
}

function Visualizations() {
  return (
    <aside className="flex w-[455px] shrink-0 flex-col border-x-2 border-[#e1dfdd] bg-[#f3f2f1] text-[28px] text-[#252423]">
      <div className="h-[232px]" />
      <svg viewBox="0 0 450 24" preserveAspectRatio="none" className="h-6 w-full" aria-hidden="true">
        <path d="M1 22H41L61 2L81 22H450" fill="none" stroke="#797775" strokeWidth="2" />
      </svg>
      <div className="grid grid-cols-[repeat(6,70px)] border-b-2 border-[#e1dfdd] pt-5 pb-[15px] pl-4">
        {vizArt.map((v) => (
          <button key={v.name} type="button" aria-label={v.name} className="flex h-[70px] items-center justify-center">
            <svg viewBox="0 0 46 46" className="size-[46px] overflow-visible" aria-hidden="true">{v.art}</svg>
          </button>
        ))}
        <button type="button" aria-label="Más objetos visuales" className="flex h-[70px] items-center justify-center gap-2.5 pb-2">
          <i className="size-[5px] rounded-full bg-[#252423]" />
          <i className="size-[5px] rounded-full bg-[#252423]" />
          <i className="size-[5px] rounded-full bg-[#252423]" />
        </button>
      </div>
      <div className="flex flex-col pt-5 pr-[13px] pl-[11px]">
        <h3 className="pl-5 leading-10">Valores</h3>
        <div className="mt-3.5 flex h-[70px] items-center rounded-md border-2 border-dashed border-[#c8c6c4] bg-white pl-6 whitespace-nowrap">Agregar campos de datos a...</div>
        <h3 className="mt-[25px] pl-5 leading-10 font-semibold text-[#484644]">Obtener detalles</h3>
        <div className="mt-[23px] flex flex-col gap-[25px] pl-5">
          <Toggle label="Entre varios informes" />
          <Toggle on label="Mantener todos los filtros" />
        </div>
        <div className="mt-6 flex h-[66px] items-center rounded-md border-2 border-dashed border-[#c8c6c4] bg-white pl-[21px] whitespace-nowrap">Agregue los campos de ob...</div>
      </div>
    </aside>
  );
}

/* ---------- Fields ---------- */

const tables = [
  { name: "drivers", fields: ["certified", "driverId", "location", "name", "ssn", "wage-plan"], sums: [] as string[] },
  { name: "timesheet", fields: ["driverId", "hours-logged", "miles-logged", "week"], sums: ["hours-logged", "miles-logged", "week"] },
];

function Fields() {
  return (
    <aside className="w-[437px] shrink-0 bg-[#f3f2f1] text-[#252423]">
      <div className="flex items-center justify-between pt-6 pr-1.5 pl-6">
        <h2 className="text-[38px] leading-[50px] font-semibold">Campos</h2>
        <button type="button" aria-label="Contraer panel">
          <svg viewBox="0 0 32 32" className="size-8" aria-hidden="true">
            <path d="M2 1L16 16L2 31M15 1L29 16L15 31" fill="none" stroke="currentColor" strokeWidth="2.400" />
          </svg>
        </button>
      </div>
      <label className="mt-[39px] ml-5 flex h-[68px] items-center border-y-2 border-l-2 border-[#797775] bg-white pl-[66px]">
        <input type="text" aria-label="Buscar campos" placeholder="Buscar" className="w-full bg-transparent text-[30px] outline-none placeholder:text-[#484644]" />
      </label>
      <div className="mt-[22px] text-[29px]">
        {tables.map((t) => (
          <section key={t.name}>
            <button type="button" className="flex h-[60px] items-center pl-[18px]">
              <svg viewBox="0 0 30 16" className="mr-2 h-4 w-[30px]" aria-hidden="true">
                <path d="M1 1L15 15L29 1" fill="none" stroke="currentColor" strokeWidth="2" />
              </svg>
              <GridGlyph color="#252423" className="mr-4 h-[30px] w-8" />
              {t.name}
            </button>
            {t.fields.map((f) => (
              <label key={f} className="flex h-[60px] items-center pl-[95px]">
                <input type="checkbox" className="size-[30px] appearance-none rounded-md border-2 border-[#8a8886]" />
                <span className="flex w-[65px] justify-center pl-1">
                  {t.sums.includes(f) && (
                    <svg viewBox="0 0 26 36" className="h-9 w-[26px]" aria-hidden="true">
                      <path d="M26 1.500H2L15 18L2 34.500H26" fill="none" stroke="currentColor" strokeWidth="2.800" />
                    </svg>
                  )}
                </span>
                {f}
              </label>
            ))}
          </section>
        ))}
      </div>
    </aside>
  );
}

/* ---------- Bottom bars ---------- */

function PageTabs() {
  return (
    <nav className="flex h-[87px] bg-[#f3f2f1] text-[28px] text-[#252423]">
      <div className="flex w-[100px] items-center justify-between border-r-2 border-[#a19f9d] px-[15px]">
        <button type="button" aria-label="Página anterior">
          <svg viewBox="0 0 11 20" className="h-5 w-[11px]" aria-hidden="true"><path d="M11 0V20L0 10Z" fill="#c8c6c4" /></svg>
        </button>
        <button type="button" aria-label="Página siguiente">
          <svg viewBox="0 0 11 20" className="h-5 w-[11px]" aria-hidden="true"><path d="M0 0V20L11 10Z" fill="#c8c6c4" /></svg>
        </button>
      </div>
      <button type="button" className="w-[215px] border-r-2 border-[#c8c6c4] pt-0.5">Página 1</button>
      <button type="button" className="w-[218px] border-b-[10px] border-[#f2c811] bg-white pt-3 font-semibold">Página 2</button>
      <button type="button" aria-label="Nueva página" className="mt-[3px] mb-[3px] flex w-[98px] items-center justify-center bg-[#f2c811]">
        <svg viewBox="0 0 28 28" className="size-7" aria-hidden="true"><path d="M14 0V28M0 14H28" stroke="#777" strokeWidth="8" /></svg>
      </button>
    </nav>
  );
}

function StatusBar() {
  return (
    <footer className="border-t-2 border-[#e1dfdd] bg-[#f3f2f1] text-[28px] text-[#605e5c]">
      <div className="flex h-[57px] items-center justify-between pr-[43px] pl-1.5">
        <span className="text-[#484644]">Página 2 de 2</span>
        <div className="flex items-center">
          <button type="button" aria-label="Alejar" className="flex h-5 w-[23px] items-center">
            <i className="block h-1 w-[11px] bg-[#605e5c]" />
          </button>
          <span className="relative flex h-7 w-[250px] items-center">
            <i className="absolute left-[124px] h-[13px] w-0.5 bg-[#605e5c]" />
            <input
              type="range"
              aria-label="Zoom"
              min="0"
              max="240"
              defaultValue="56"
              className="relative h-7 w-full appearance-none bg-transparent [&::-webkit-slider-runnable-track]:h-[3px] [&::-webkit-slider-runnable-track]:bg-[#605e5c] [&::-webkit-slider-thumb]:-mt-3 [&::-webkit-slider-thumb]:h-[27px] [&::-webkit-slider-thumb]:w-2.5 [&::-webkit-slider-thumb]:appearance-none [&::-webkit-slider-thumb]:bg-[#605e5c]"
            />
          </span>
          <button type="button" aria-label="Acercar" className="ml-3.5">
            <svg viewBox="0 0 18 18" className="size-[18px]" aria-hidden="true"><path d="M9 0V18M0 9H18" stroke="#605e5c" strokeWidth="4" /></svg>
          </button>
          <output className="ml-10 w-[109px]">54 %</output>
          <button type="button" aria-label="Ajustar a la página">
            <svg viewBox="0 0 41 30" className="h-[30px] w-[41px]" aria-hidden="true">
              <rect x="1.500" y="1.500" width="38" height="27" fill="none" stroke="#605e5c" strokeWidth="2.600" />
              <path d="M6.500 12V6.500H13M28 6.500H34.500V12M34.500 18V23.500H28M13 23.500H6.500V18" fill="none" stroke="#605e5c" strokeWidth="2.600" />
            </svg>
          </button>
        </div>
      </div>
      <div className="flex h-1 bg-[#1b2b45]">
        <i className="w-[114px] bg-[#1f3540]" />
        <i className="w-[860px] bg-[#c1bfbe]" />
        <i className="w-[620px] bg-[#1f3b40]" />
      </div>
    </footer>
  );
}

/* ---------- Account card ---------- */

function AccountCard() {
  return (
    <div className="absolute top-0 right-[316px] z-20 w-[832px] bg-white text-[28px] text-[#3b3a39] shadow-[0_24px_80px_rgba(0,0,0,0.2),0_6px_28px_rgba(0,0,0,0.14)]">
      <div className="flex justify-end pt-[38px] pr-[38px]">
        <button type="button" className="leading-10">Cerrar sesión</button>
      </div>
      <div className="flex gap-[50px] pt-[86px] pb-[38px] pl-[37px]">
        <div className="size-[220px] rounded-full bg-[#f3f2f1]" />
        <div className="flex flex-col items-start pt-[3px] leading-[50px]">
          <h2 className="text-[43px] leading-[48px] font-bold">Juan David Velasquez</h2>
          <span>jdvelasq@unal.edu.co</span>
          <a href="#cuenta" className="text-[#0078d4]">Ver cuenta</a>
          <a href="#servicio" className="relative text-[#0078d4]">
            Servicio de Power Bi
            <i className="absolute top-[53px] -left-1.5 h-[22px] w-[313px] rounded-md bg-[#ff2f6d]" />
          </a>
        </div>
      </div>
      <div className="flex h-[118px] items-center border-t-2 border-[#e9e8e7] bg-[#f3f2f1] pt-0.5 pl-[114px]">
        <button type="button">Iniciar sesión con otra cuenta</button>
      </div>
    </div>
  );
}

export default function App() {
  return (
    <div className="relative flex min-h-screen flex-col overflow-hidden bg-[#f3f2f1] font-['Open_Sans','Noto_Sans',sans-serif]">
      <Ribbon />
      <main className="flex flex-1">
        <Rail />
        <div className="flex min-w-0 flex-1 flex-col">
          <div className="flex flex-1">
            <div className="min-w-0 flex-1 overflow-hidden bg-white">
              <div className="h-[976px]">
                <Chart />
              </div>
              <div className="ml-1 h-0 border-b-[5px] border-dotted border-[#605e5c]" />
            </div>
            <div className="-ml-0.5 h-[981px] w-0.5 border-r-2 border-dashed border-[#8a8886]" />
            <Filters />
          </div>
          <PageTabs />
        </div>
        <Visualizations />
        <Fields />
      </main>
      <StatusBar />
      <AccountCard />
      <div className="pointer-events-none absolute top-7 right-[225px] z-30 h-[558px] w-[949px] rounded-lg border-[14px] border-[#ff2f6d]" />
    </div>
  );
}
